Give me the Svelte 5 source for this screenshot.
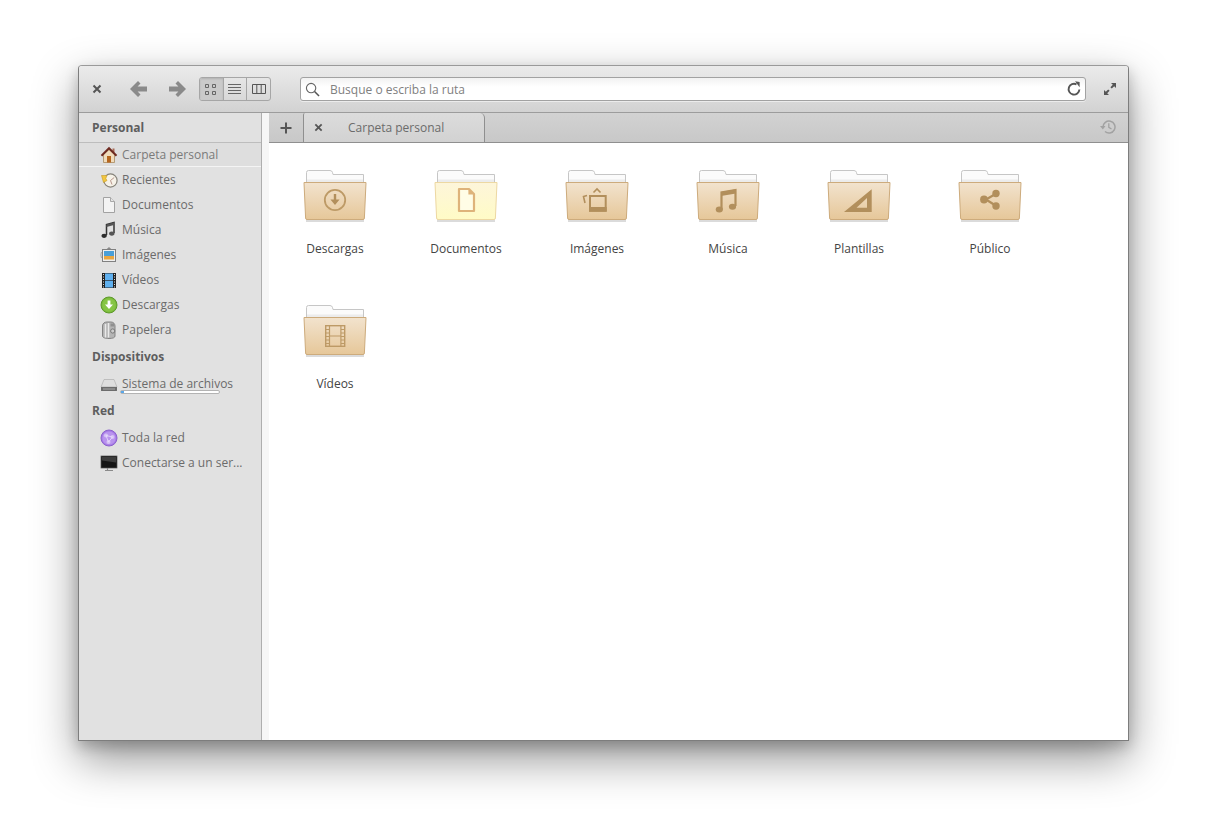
<script>
  const places = [
    { label: 'Carpeta personal', icon: 'home', selected: true },
    { label: 'Recientes', icon: 'recent' },
    { label: 'Documentos', icon: 'doc' },
    { label: 'Música', icon: 'music' },
    { label: 'Imágenes', icon: 'image' },
    { label: 'Vídeos', icon: 'film' },
    { label: 'Descargas', icon: 'down' },
    { label: 'Papelera', icon: 'trash' }
  ];
  const folders = [
    { label: 'Descargas', glyph: 'down' },
    { label: 'Documentos', glyph: 'doc', yellow: true },
    { label: 'Imágenes', glyph: 'image' },
    { label: 'Música', glyph: 'music' },
    { label: 'Plantillas', glyph: 'templates' },
    { label: 'Público', glyph: 'share' },
    { label: 'Vídeos', glyph: 'film' }
  ];
</script>

{#snippet sideIcon(name)}
  <svg class="side-icon" width="18" height="18" viewBox="0 0 18 18">
    {#if name === 'home'}
      <path d="M3.5 8.5V16.5H14.5V8.5L9 3.5Z" fill="#f0dcbc" stroke="#a98a5e" stroke-width=".8"/>
      <rect x="7" y="10" width="4" height="6.5" fill="#b5651d"/>
      <rect x="12.5" y="2.5" width="2" height="4" fill="#a86a55"/>
      <path d="M1.5 9.8L9 2.2L16.5 9.8" fill="none" stroke="#6e2a20" stroke-width="2"/>
    {:else if name === 'recent'}
      <circle cx="10.5" cy="9.5" r="6.6" fill="#f6f2e8" stroke="#86837a" stroke-width="1.2"/>
      <path d="M10.5 9.5L14.2 6.5M10.5 9.5L12 13.5" stroke="#b08a80" stroke-width=".9" fill="none"/>
      <path d="M1.5 4.5H7L5.8 7.5L7 9.5L3.5 11.5L2.5 8Z" fill="#f2c63f" stroke="#c49a2a" stroke-width=".6"/>
    {:else if name === 'doc'}
      <path d="M3.5 1.5H10.5L14.5 5.5V16.5H3.5Z" fill="#f3f3f3" stroke="#a2a2a2"/>
      <path d="M10.5 1.5V5.5H14.5" fill="#e4e4e4" stroke="#a8a8a8"/>
    {:else if name === 'music'}
      <path d="M6.5 14V3.5L14 1.5V12" fill="none" stroke="#333" stroke-width="1.5"/>
      <path d="M6.5 3.5L14 1.5V4L6.5 6Z" fill="#555"/>
      <ellipse cx="4.2" cy="14.8" rx="2.7" ry="2.1" fill="#2c2c2c"/>
      <ellipse cx="11.8" cy="12.6" rx="2.7" ry="2.1" fill="#555"/>
    {:else if name === 'image'}
      <path d="M9 1L11.2 3H6.8Z" fill="#8a8a8a"/>
      <path d="M1.5 6L.8 9L1.5 12" fill="none" stroke="#999" stroke-width=".8"/>
      <rect x="2.5" y="3.5" width="13" height="12" fill="#efefef" stroke="#808080"/>
      <rect x="4" y="5" width="10" height="5" fill="#4a9fd8"/>
      <rect x="4" y="10" width="10" height="3.5" fill="#eba63f"/>
    {:else if name === 'film'}
      <rect x="2" y="2" width="14" height="15" fill="#222"/>
      <rect x="5" y="2.5" width="8" height="6.7" fill="#5fb0ef"/>
      <rect x="5" y="9.8" width="8" height="6.7" fill="#5fb0ef"/>
      <path d="M3 3.5h1M3 6h1M3 8.5h1M3 11h1M3 13.5h1M3 16h1M14 3.5h1M14 6h1M14 8.5h1M14 11h1M14 13.5h1M14 16h1" stroke="#ddd" stroke-width="1"/>
    {:else if name === 'down'}
      <circle cx="9" cy="9" r="8" fill="#78b83a" stroke="#5e9a2a"/>
      <circle cx="9" cy="9" r="6.8" fill="#86c544"/>
      <path d="M7.6 4.5H10.4V8.5H13L9 13L5 8.5H7.6Z" fill="#fff"/>
    {:else if name === 'trash'}
      <path d="M2.5 5C2.5 2 5 1 7 1H11C13.5 1 15 3 15 5V15C15 16.5 13 17.5 9 17.5C5 17.5 2.5 16.5 2.5 15Z" fill="#b4b4b4" stroke="#838383"/>
      <path d="M5.5 3V16.5M8.5 2V16.5" stroke="#e9e9e9" stroke-width="1.4"/>
      <rect x="10.5" y="2.5" width="3.5" height="3" fill="#8f8f8f"/>
      <circle cx="12.7" cy="10" r="2.1" fill="#ccc" stroke="#707070" stroke-width=".9"/>
    {:else if name === 'disk'}
      <path d="M4 4.5H14L17 12H1Z" fill="#dedede" stroke="#b0b0b0" stroke-width=".7"/>
      <path d="M1 12H17V15.5Q17 16 16 16H2Q1 16 1 15.5Z" fill="#6c6c6c"/>
      <path d="M3 14H15" stroke="#a9a9a9"/>
    {:else if name === 'network'}
      <circle cx="9" cy="9" r="8" fill="#a579e6" stroke="#8c62cc"/>
      <circle cx="9" cy="9" r="6.6" fill="#b993ee"/>
      <circle cx="6" cy="6.5" r="2.1" fill="#d6c2f5"/>
      <circle cx="12.5" cy="8" r="2" fill="#d6c2f5"/>
      <circle cx="8.5" cy="13" r="2" fill="#d6c2f5"/>
      <path d="M6 6.5L12.5 8L8.5 13Z" fill="none" stroke="#e8dcfb" stroke-width=".8"/>
    {:else if name === 'server'}
      <rect x="1" y="2" width="16" height="12" fill="#141414" stroke="#555" stroke-width=".7"/>
      <path d="M2 3H16V8.5L2 6.5Z" fill="#3c3c3c"/>
      <path d="M7.5 14V16M5 16.5H13" stroke="#8a8a8a" stroke-width="1.2"/>
    {/if}
  </svg>
{/snippet}

{#snippet glyph(name)}
  {#if name === 'down'}
    <circle cx="32" cy="32" r="10.2" fill="none" stroke="#bd9a66" stroke-width="1.8"/>
    <path d="M30.8 26H33.2V31.5H36.6L32 37L27.4 31.5H30.8Z" fill="#b28f5c"/>
  {:else if name === 'doc'}
    <path d="M25 21H35L40 26V43H25Z" fill="#fffde6" stroke="#deb37a" stroke-width="2.2" stroke-linejoin="round"/>
    <path d="M35 21V26H40" fill="#deb37a" stroke="#deb37a" stroke-width="1.2"/>
  {:else if name === 'image'}
    <rect x="25" y="28" width="15.7" height="14.7" fill="none" stroke="#b28f5c" stroke-width="2"/>
    <rect x="24" y="39" width="17.7" height="4.7" fill="#b28f5c"/>
    <path d="M28.5 24.5L32 21L35.5 24.5" fill="none" stroke="#b28f5c" stroke-width="1.6"/>
    <path d="M22 27.5L18.5 28.5L20 35" fill="none" stroke="#b28f5c" stroke-width="1.6"/>
  {:else if name === 'music'}
    <path d="M25.5 41V24.5L39.5 22V38" fill="none" stroke="#b28f5c" stroke-width="2.2"/>
    <path d="M25 24L40 21.3V25.5L25 28Z" fill="#b28f5c"/>
    <ellipse cx="23.3" cy="41.5" rx="3.6" ry="3" fill="#b28f5c"/>
    <ellipse cx="36.5" cy="38.8" rx="3.6" ry="3" fill="#b28f5c"/>
  {:else if name === 'templates'}
    <path fill-rule="evenodd" d="M44.7 21.3V44H17ZM40 30L29.5 39.7H40Z" fill="#b28f5c"/>
  {:else if name === 'share'}
    <path d="M28 31.5L37.5 26M28 31.5L37.5 37.5" stroke="#b28f5c" stroke-width="2.2" fill="none"/>
    <circle cx="26" cy="31.5" r="3.9" fill="#b28f5c"/>
    <circle cx="38" cy="25.5" r="3.7" fill="#b28f5c"/>
    <circle cx="38" cy="38" r="3.7" fill="#b28f5c"/>
  {:else if name === 'film'}
    <rect x="22.7" y="22.7" width="19" height="20.6" fill="none" stroke="#bd9a66" stroke-width="1.4"/>
    <path d="M26.5 22.7V43.3M37.9 22.7V43.3M26.5 33H37.9M22.7 26.5H26.5M22.7 30H26.5M22.7 33.5H26.5M22.7 37H26.5M22.7 40.5H26.5M37.9 26.5H41.7M37.9 30H41.7M37.9 33.5H41.7M37.9 37H41.7M37.9 40.5H41.7" stroke="#bd9a66" stroke-width="1.2" fill="none"/>
  {/if}
{/snippet}

<svg class="defs" width="0" height="0" aria-hidden="true">
  <defs>
    <linearGradient id="fTan" x1="0" y1="0" x2="0" y2="1">
      <stop offset="0" stop-color="#f2e3ce"/>
      <stop offset="1" stop-color="#e6c799"/>
    </linearGradient>
    <linearGradient id="fYellow" x1="0" y1="0" x2="0" y2="1">
      <stop offset="0" stop-color="#fdf5da"/>
      <stop offset="1" stop-color="#fffbc6"/>
    </linearGradient>
  </defs>
</svg>

<div class="page">
  <div class="window">
    <header class="toolbar">
      <button class="close" aria-label="Cerrar">
        <svg width="10" height="10" viewBox="0 0 10 10"><path d="M1.5 1.5L8.5 8.5M8.5 1.5L1.5 8.5" stroke="#555" stroke-width="2"/></svg>
      </button>
      <button class="nav back" aria-label="Atrás">
        <svg width="17" height="16" viewBox="0 0 17 16"><path d="M8 0L0 8L8 16L10.5 13.5L7.6 10.6H17V5.4H7.6L10.5 2.5Z" fill="#8a8a8a"/></svg>
      </button>
      <button class="nav fwd" aria-label="Adelante">
        <svg width="17" height="16" viewBox="0 0 17 16"><path d="M9 0L17 8L9 16L6.5 13.5L9.4 10.6H0V5.4H9.4L6.5 2.5Z" fill="#8a8a8a"/></svg>
      </button>
      <div class="views">
        <button class="view on" aria-label="Iconos">
          <svg width="14" height="14" viewBox="0 0 14 14"><path d="M1.5 2.5h3v3h-3zM8.5 2.5h3v3h-3zM1.5 9.5h3v3h-3zM8.5 9.5h3v3h-3z" fill="none" stroke="#666"/></svg>
        </button>
        <button class="view" aria-label="Lista">
          <svg width="14" height="14" viewBox="0 0 14 14"><path d="M0 2.5H13M0 5.5H13M0 8.5H13M0 11.5H13" stroke="#666"/></svg>
        </button>
        <button class="view" aria-label="Columnas">
          <svg width="14" height="14" viewBox="-1 0 14 14"><path d="M-.5 2.5h13v9h-13zM3.8 2.5v9M8.2 2.5v9" fill="none" stroke="#555"/></svg>
        </button>
      </div>
      <div class="search">
        <svg width="15" height="15" viewBox="0 0 16 16"><circle cx="6.5" cy="6.5" r="5" fill="none" stroke="#666" stroke-width="1.2"/><path d="M10.2 10.2L15 15" stroke="#555" stroke-width="1.6"/></svg>
        <span class="placeholder">Busque o escriba la ruta</span>
        <svg class="reload" width="14" height="16" viewBox="0 0 14 16"><path d="M9.5 3.4A5.4 5.4 0 1 0 12.4 8.5" fill="none" stroke="#555" stroke-width="1.9"/><path d="M8 .2L12.6 1V6.2Z" fill="#555"/></svg>
      </div>
      <button class="expand" aria-label="Pantalla completa">
        <svg width="14" height="14" viewBox="0 0 14 14"><path d="M8 1H13V6L11.2 4.2L8.8 6.6L7.4 5.2L9.8 2.8ZM1 8L2.8 9.8L5.2 7.4L6.6 8.8L4.2 11.2L6 13H1Z" fill="#555"/></svg>
      </button>
    </header>

    <div class="body">
      <aside class="sidebar">
        <div class="heading">Personal</div>
        {#each places as p}
          <div class="row" class:selected={p.selected}>
            {@render sideIcon(p.icon)}<span>{p.label}</span>
          </div>
        {/each}
        <div class="heading">Dispositivos</div>
        <div class="row disk">
          {@render sideIcon('disk')}<span>Sistema de archivos</span>
          <div class="usage"><i></i></div>
        </div>
        <div class="heading">Red</div>
        <div class="row">{@render sideIcon('network')}<span>Toda la red</span></div>
        <div class="row">{@render sideIcon('server')}<span>Conectarse a un ser...</span></div>
      </aside>

      <main class="pane">
        <div class="tabs">
          <button class="add" aria-label="Nueva pestaña">
            <svg width="12" height="12" viewBox="0 0 12 12"><path d="M6 .5V11.5M.5 6H11.5" stroke="#555" stroke-width="2"/></svg>
          </button>
          <div class="tab">
            <svg width="9" height="9" viewBox="0 0 10 10"><path d="M1.5 1.5L8.5 8.5M8.5 1.5L1.5 8.5" stroke="#555" stroke-width="2"/></svg>
            <span>Carpeta personal</span>
          </div>
          <svg class="history" width="16" height="16" viewBox="0 0 16 16"><path d="M3 8A6 6 0 1 1 5 12.5" fill="none" stroke="#a2a2a2" stroke-width="1.5"/><path d="M0 7H5.5L2.8 10.5Z" fill="#a2a2a2"/><path d="M8.8 4.2V8.4L11.5 10" fill="none" stroke="#a2a2a2" stroke-width="1.3"/></svg>
        </div>
        <div class="grid">
          {#each folders as f}
            <div class="item">
              <svg class="folder" width="64" height="56" viewBox="0 0 64 56">
                <path d="M3.5 16V4.5Q3.5 2.5 5.5 2.5H27Q29 2.5 29.5 4.5L30 6.5H60.5V16Z" fill="#fbfbfb" stroke="#c6c6c6"/>
                <path d="M4 13H60" stroke="#e9e9e9" stroke-width="3" opacity=".8"/>
                <path d="M3 52.5H61" stroke="#000" stroke-opacity=".14" stroke-width="3"/>
                <path d="M1 14.5H63L61.4 50Q61.4 51.5 60 51.5H4Q2.6 51.5 2.6 50Z" fill={f.yellow ? 'url(#fYellow)' : 'url(#fTan)'} stroke={f.yellow ? '#edd8a2' : '#cdab7c'}/>
                {@render glyph(f.glyph)}
              </svg>
              <span>{f.label}</span>
            </div>
          {/each}
        </div>
      </main>
    </div>
  </div>
</div>

<style>
  :global(body) { margin: 0; background: #fff; }
  .defs { position: absolute; }
  .page {
    box-sizing: border-box;
    width: 1207px;
    height: 833px;
    padding: 65px 78px 92px;
    overflow: hidden;
    font-family: "Open Sans", sans-serif;
    font-size: 12px;
  }
  .window {
    box-sizing: border-box;
    width: 1051px;
    height: 676px;
    display: flex;
    flex-direction: column;
    border: 1px solid #7d7d7d;
    border-top-color: #9a9a9a;
    border-radius: 4px 4px 0 0;
    background: #fff;
    box-shadow: 0 18px 45px rgba(0,0,0,.42), 0 6px 14px rgba(0,0,0,.2);
  }
  button { border: 0; background: none; padding: 0; display: flex; align-items: center; justify-content: center; }
  .toolbar {
    box-sizing: border-box;
    height: 47px;
    flex: none;
    display: flex;
    align-items: center;
    padding-left: 13px;
    background: linear-gradient(#ebebeb, #d2d2d2);
    border-bottom: 1px solid #9c9c9c;
    border-radius: 3px 3px 0 0;
  }
  .close { width: 10px; height: 10px; }
  .nav { width: 17px; height: 16px; }
  .back { margin-left: 28px; }
  .fwd { margin-left: 22px; }
  .views {
    margin-left: 13px;
    display: flex;
    height: 24px;
    width: 72px;
    box-sizing: border-box;
    border: 1px solid #a6a6a6;
    border-radius: 3px;
    overflow: hidden;
    background: linear-gradient(#e6e6e6, #d8d8d8);
  }
  .view { flex: 1; border-left: 1px solid #a6a6a6; }
  .view:first-child { border-left: 0; }
  .view.on { background: #cacaca; box-shadow: inset 0 1px 2px rgba(0,0,0,.12); }
  .search {
    margin-left: 29px;
    box-sizing: border-box;
    width: 786px;
    height: 24px;
    display: flex;
    align-items: center;
    padding: 0 4px;
    background: linear-gradient(#f2f2f2, #fff 40%);
    border: 1px solid #a2a2a2;
    border-radius: 3px;
    box-shadow: 0 1px 0 rgba(255,255,255,.5);
  }
  .placeholder { margin-left: 10px; color: #808080; }
  .reload { margin-left: auto; margin-right: 0; }
  .expand { width: 14px; height: 14px; margin-left: 17px; }
  .body { flex: 1; display: flex; min-height: 0; }
  .sidebar {
    box-sizing: border-box;
    width: 183px;
    flex: none;
    background: #e1e1e1;
    border-right: 1px solid #aeaeae;
    color: #6b6b6b;
  }
  .heading {
    height: 29px;
    line-height: 29px;
    padding-left: 13px;
    font-weight: 700;
    color: #5e5e5e;
  }
  .row {
    position: relative;
    box-sizing: border-box;
    height: 25px;
    display: flex;
    align-items: center;
    padding-left: 21px;
    gap: 4px;
    white-space: nowrap;
  }
  .side-icon { flex: none; }
  .row.selected {
    background: #dedede;
    border-top: 1px solid #bdbdbd;
    border-bottom: 1px solid #f4f4f4;
    color: #7a7a7a;
  }
  .usage {
    position: absolute;
    left: 41px;
    top: 19px;
    width: 100px;
    height: 4px;
    box-sizing: border-box;
    background: #fff;
    border: 1px solid #b3b3b3;
    border-radius: 2px;
  }
  .usage i { display: block; width: 3px; height: 100%; background: #5aa7e8; }
  .pane {
    flex: 1;
    min-width: 0;
    display: flex;
    flex-direction: column;
    padding-left: 7px;
    background: #f6f6f6;
  }
  .tabs {
    box-sizing: border-box;
    height: 30px;
    flex: none;
    display: flex;
    align-items: stretch;
    background: linear-gradient(#d2d2d2, #c8c8c8);
    border-bottom: 1px solid #8f8f8f;
    padding-right: 12px;
  }
  .add { width: 34px; }
  .tab {
    box-sizing: border-box;
    width: 182px;
    display: flex;
    align-items: center;
    padding-left: 10px;
    background: linear-gradient(#dcdcdc, #d2d2d2);
    border: 1px solid #8f8f8f;
    border-top: 0;
    border-bottom: 0;
    border-top-left-radius: 2px;
    border-top-right-radius: 5px;
    color: #6b6b6b;
  }
  .tab span { margin-left: 25px; }
  .history { margin: 6px 0 0 auto; }
  .grid {
    flex: 1;
    background: #fff;
    display: grid;
    padding-left: .5px;
    grid-template-columns: repeat(6, 131px);
    grid-auto-rows: 135px;
    align-content: start;
  }
  .item {
    display: flex;
    flex-direction: column;
    align-items: center;
    padding-top: 25px;
    color: #444;
  }
  .item span { margin-top: 17px; line-height: 16px; }
</style>
